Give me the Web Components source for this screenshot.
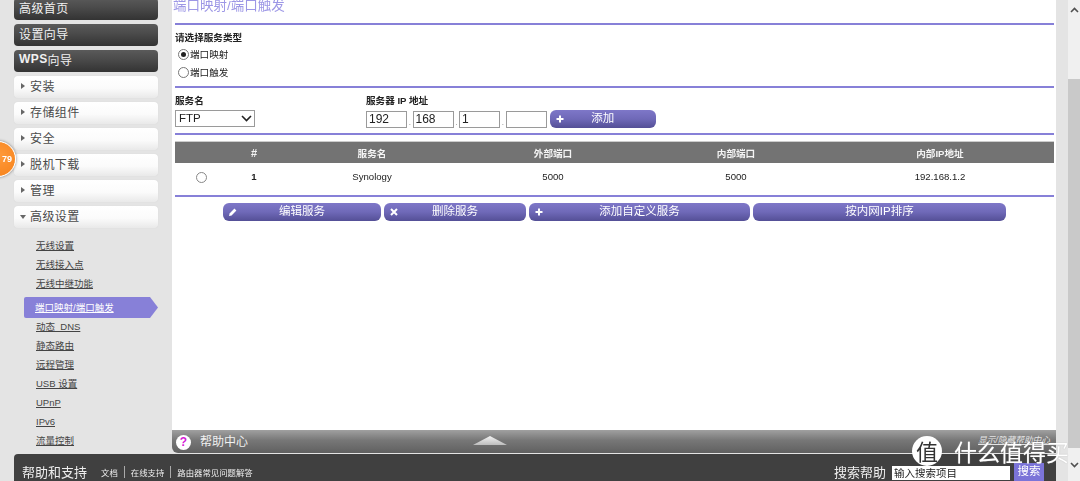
<!DOCTYPE html>
<html lang="zh">
<head>
<meta charset="utf-8">
<title>端口映射/端口触发</title>
<style>
  html, body { margin: 0; height: 481px; overflow: hidden; background: #e4e4e4; }
  body { font-family: "Liberation Sans", "Noto Sans CJK SC", sans-serif; }
</style>
</head>
<body>
<router-page></router-page>

<script>
const FONT = `"Liberation Sans", "Noto Sans CJK SC", sans-serif`;

// dark and light buttons of the left menu
class MenuButton extends HTMLElement {
  connectedCallback() {
    const kind = this.getAttribute('kind') || 'closed';
    const arrow = kind === 'dark' ? '' : `<span class="arrow ${kind}"></span>`;
    this.attachShadow({ mode: 'open' }).innerHTML = `
      <style>
        :host { display: block; height: 22px; margin-bottom: 4px; }
        .btn {
          height: 100%; box-sizing: border-box; display: flex; align-items: center; padding-bottom: 4px;
          border-radius: 4px; font: 12px ${FONT}; letter-spacing: .4px;
        }
        .dark { background: linear-gradient(#5a5a5a 0%, #4a4a4a 45%, #333 100%); color: #f1f1f1; padding-left: 5px; }
        .light {
          background: linear-gradient(#fff 0%, #fbfbfb 55%, #e9e9e9 100%); color: #4a4a4a;
          padding-left: 7px; box-shadow: 0 0 1px #cfcfcf;
        }
        .arrow { width: 0; height: 0; margin: 2px 5px 0 0; }
        .closed { border-left: 4px solid #666; border-top: 3px solid transparent; border-bottom: 3px solid transparent; }
        .open { border-top: 4px solid #666; border-left: 3px solid transparent; border-right: 3px solid transparent; margin: 4px 4px 0 -1px; }
      </style>
      <div class="btn ${kind === 'dark' ? 'dark' : 'light'}">${arrow}<slot></slot></div>`;
  }
}
customElements.define('menu-button', MenuButton);

// one link of the advanced settings submenu
class MenuLink extends HTMLElement {
  connectedCallback() {
    this.attachShadow({ mode: 'open' }).innerHTML = `
      <style>
        :host { display: block; height: 19px; padding-left: 36px; box-sizing: border-box; }
        span { font: 9.5px/19px ${FONT}; color: #444; text-decoration: underline; white-space: pre; }
        :host([active]) {
          height: 21px; width: 134px; margin: 5px 0 -2px 24px; padding-left: 11px;
          background: #8780d8; border-radius: 2px 0 0 2px;
          clip-path: polygon(0 0, 126px 0, 100% 50%, 126px 100%, 0 100%);
        }
        :host([active]) span { color: #fff; line-height: 21px; }
      </style>
      <span><slot></slot></span>`;
  }
}
customElements.define('menu-link', MenuLink);

class SideMenu extends HTMLElement {
  connectedCallback() {
    this.attachShadow({ mode: 'open' }).innerHTML = `
      <style>
        :host { display: block; width: 172px; flex: none; background: #e4e4e4; position: relative; }
        .buttons { margin: -2px 14px 0 14px; }
        .links { margin-top: 7px; }
        .badge {
          position: absolute; left: -20px; top: 141px; height: 34px; padding-right: 3px;
          box-sizing: content-box; width: 31px;
          border-radius: 50%; background: radial-gradient(circle at 55% 40%, #ff9a3a, #f57f17);
          border: 1px solid #fff; box-shadow: 0 0 3px #777;
          color: #fff; font: bold 9px/34px ${FONT}; text-align: right;
        }
      </style>
      <div class="buttons">
        <menu-button kind="dark">高级首页</menu-button>
        <menu-button kind="dark">设置向导</menu-button>
        <menu-button kind="dark"><b>WPS</b>向导</menu-button>
        <menu-button>安装</menu-button>
        <menu-button>存储组件</menu-button>
        <menu-button>安全</menu-button>
        <menu-button>脱机下载</menu-button>
        <menu-button>管理</menu-button>
        <menu-button kind="open">高级设置</menu-button>
      </div>
      <div class="links">
        <menu-link>无线设置</menu-link>
        <menu-link>无线接入点</menu-link>
        <menu-link>无线中继功能</menu-link>
        <menu-link active>端口映射/端口触发</menu-link>
        <menu-link>动态  DNS</menu-link>
        <menu-link>静态路由</menu-link>
        <menu-link>远程管理</menu-link>
        <menu-link>USB 设置</menu-link>
        <menu-link>UPnP</menu-link>
        <menu-link>IPv6</menu-link>
        <menu-link>流量控制</menu-link>
      </div>
      <div class="badge">79</div>`;
  }
}
customElements.define('side-menu', SideMenu);

// purple action button with an optional icon on the left
const ICONS = {
  plus: '<path d="M5 1.5v7M1.5 5h7" stroke="#fff" stroke-width="2"/>',
  cross: '<path d="M2 2l6 6M8 2L2 8" stroke="#fff" stroke-width="2"/>',
  pencil: '<path d="M1 9l.6-2.6L6.4 1.6l2 2L3.6 8.400z" fill="#fff"/>',
};
class ActionButton extends HTMLElement {
  connectedCallback() {
    const icon = this.getAttribute('icon');
    const svg = icon ? `<svg width="10" height="10" viewBox="0 0 10 10">${ICONS[icon]}</svg>` : '';
    this.attachShadow({ mode: 'open' }).innerHTML = `
      <style>
        :host { display: block; height: 18px; flex: none; }
        .b {
          height: 100%; position: relative; display: flex; align-items: center; justify-content: center;
          border-radius: 6px; background: linear-gradient(#7e77c8 0%, #6f69b8 50%, #544f96 100%);
          color: #fff; font: 11.5px/16px ${FONT}; padding-bottom: 2px; box-sizing: border-box;
        }
        svg { position: absolute; left: 5px; top: 4px; }
      </style>
      <div class="b">${svg}<slot></slot></div>`;
  }
}
customElements.define('action-button', ActionButton);

class PortPanel extends HTMLElement {
  connectedCallback() {
    this.attachShadow({ mode: 'open' }).innerHTML = `
      <style>
        :host { display: block; flex: 1; background: #fff; padding: 0 2px 0 3px; color: #222; font: 9.6px ${FONT}; min-width: 0; }
        .title { height: 23px; margin: -6px 0 -1px -2px; font: 13.5px/23px ${FONT}; color: #9d97e6; }
        hr { border: 0; height: 2px; background: #8780d8; margin: 0; }
        .type { height: 61px; box-sizing: border-box; padding-top: 6px; }
        .type div { height: 18px; display: flex; align-items: center; padding-left: 3px; }
        .type .head { font-weight: bold; padding-left: 0; height: 14px; line-height: 14px; }
        .dot { width: 9px; height: 9px; border: 1px solid #777; border-radius: 50%; margin-right: 1px; flex: none; background: #fff; box-sizing: content-box; position: relative; }
        .dot.on::after { content: ""; position: absolute; inset: 2px; border-radius: 50%; background: #222; }
        .service { height: 45px; box-sizing: border-box; padding-top: 6px; display: flex; }
        .service b { display: block; height: 13px; line-height: 13px; margin-bottom: 3px; }
        .name { width: 191px; }
        .select {
          width: 80px; height: 17px; box-sizing: border-box; border: 1px solid #9a9a9a; background: #fff;
          font: 11.5px/15px ${FONT}; padding-left: 3px; display: flex; justify-content: space-between; align-items: center;
        }
        .select svg { margin-right: 2px; }
        .ip { display: flex; align-items: center; }
        .ip i {
          display: block; width: 41px; height: 17px; box-sizing: border-box; border: 1px solid #9a9a9a;
          font: normal 12px/15px ${FONT}; padding-left: 2px; background: #fff;
        }
        .ip u { width: 5.5px; text-decoration: none; font-size: 8px; padding-top: 6px; color: #777; text-align: center; }
        .ip action-button { width: 106.5px; margin-left: 3px; }
        .table { margin-top: 6px; height: 54px; }
        .row { display: grid; grid-template-columns: 53px 52px 184px 178px 188px 1fr; padding-right: 4px; text-align: center; align-items: center; }
        .row.th { height: 22px; background: #737373; color: #f4f4f4; font-weight: bold; border-top: 1px solid #ccc; box-sizing: border-box; }
        .row.th .hash { font-size: 11px; }
        .row.td { height: 26px; box-sizing: border-box; }
        .row .dot { margin: 3px auto 0; border-color: #888; }
        .actions { display: flex; gap: 3px; padding: 6px 0 0 48px; }
        .actions :nth-child(1) { width: 158px; }
        .actions :nth-child(2) { width: 142px; }
        .actions :nth-child(3) { width: 221px; }
        .actions :nth-child(4) { width: 253px; }
      </style>
      <div class="title">端口映射/端口触发</div>
      <hr style="margin-top:7px">
      <div class="type">
        <div class="head">请选择服务类型</div>
        <div><span class="dot on"></span>端口映射</div>
        <div><span class="dot"></span>端口触发</div>
      </div>
      <hr>
      <div class="service">
        <div class="name">
          <b>服务名</b>
          <div class="select">FTP <svg width="11" height="7" viewBox="0 0 11 7"><path d="M1 1l4.500 4.500L10 1" fill="none" stroke="#222" stroke-width="1.600"/></svg></div>
        </div>
        <div>
          <b>服务器 IP 地址</b>
          <div class="ip">
            <i>192</i><u>.</u><i>168</i><u>.</u><i>1</i><u>.</u><i></i>
            <action-button icon="plus">添加</action-button>
          </div>
        </div>
      </div>
      <hr>
      <div class="table">
        <div class="row th"><span></span><span class="hash">#</span><span>服务名</span><span>外部端口</span><span>内部端口</span><span>内部IP地址</span></div>
        <div class="row td"><span class="dot"></span><b>1</b><span>Synology</span><span>5000</span><span>5000</span><span>192.168.1.2</span></div>
      </div>
      <hr>
      <div class="actions">
        <action-button icon="pencil">编辑服务</action-button>
        <action-button icon="cross">删除服务</action-button>
        <action-button icon="plus">添加自定义服务</action-button>
        <action-button>按内网IP排序</action-button>
      </div>`;
  }
}
customElements.define('port-panel', PortPanel);

// grey drawer at the bottom of the content area
class HelpBar extends HTMLElement {
  connectedCallback() {
    this.attachShadow({ mode: 'open' }).innerHTML = `
      <style>
        :host {
          display: flex; align-items: center; height: 23px; flex: none; position: relative;
          background: linear-gradient(#a0a0a0 0%, #777 45%, #606060 100%);
          border-radius: 0 0 0 6px; color: #f0f0f0; font: 12px ${FONT};
        }
        .q {
          width: 15px; height: 15px; border-radius: 50%; background: #fff; margin: 1px 9px 0 4px;
          color: #d61bd6; font: bold 12px/15px ${FONT}; text-align: center;
        }
        .label { margin-top: -3px; }
        .up {
          position: absolute; left: 301px; top: 6px; width: 34px; height: 9px;
          background: linear-gradient(#f4f4f4, #bdbdbd);
          clip-path: polygon(50% 0, 100% 100%, 0 100%);
        }
        .toggle {
          position: absolute; right: 6px; top: 3px; font: italic 8.7px ${FONT};
          color: #e4e4e4; text-decoration: underline;
        }
      </style>
      <span class="q">?</span><span class="label">帮助中心</span>
      <span class="up"></span>
      <span class="toggle">显示/隐藏帮助中心</span>`;
  }
}
customElements.define('help-bar', HelpBar);

class FooterBar extends HTMLElement {
  connectedCallback() {
    this.attachShadow({ mode: 'open' }).innerHTML = `
      <style>
        :host {
          position: absolute; left: 14px; right: 24px; top: 454px; height: 27px; box-sizing: border-box; padding-top: 8px;
          display: flex; align-items: center;
          background: #404040; border-radius: 4px 0 0 0; color: #eee; font: 8.4px ${FONT};
        }
        h2 { font: 13px ${FONT}; margin: 0 14px 0 8px; }
        .sep { width: 1px; height: 12px; background: #aaa; margin: 0 6px; }
        .search { margin-left: auto; align-self: stretch; display: flex; align-items: flex-start; font-size: 13px; padding-right: 12px; }
        .input {
          width: 118px; height: 14px; margin: 4px 0 0 6px; background: #fff; color: #222;
          font: 10.5px/14px ${FONT}; padding-left: 2px; box-sizing: border-box;
        }
        .go { width: 30px; height: 18px; margin: 1px 0 0 4px; background: #7b74d8; color: #fff; font: 11.5px/17px ${FONT}; text-align: center; }
      </style>
      <h2>帮助和支持</h2>
      <span>文档</span><span class="sep"></span><span>在线支持</span><span class="sep"></span><span>路由器常见问题解答</span>
      <div class="search">搜索帮助<div class="input">输入搜索项目</div><div class="go">搜索</div></div>`;
  }
}
customElements.define('footer-bar', FooterBar);

class ScrollTrack extends HTMLElement {
  connectedCallback() {
    this.attachShadow({ mode: 'open' }).innerHTML = `
      <style>
        :host { display: flex; flex-direction: column; width: 12px; flex: none; background: #f0f0f0; height: 481px; }
        svg { display: block; margin: 7px auto 0; }
        .thumb { margin-top: 66px; flex: 1; background: #c9c9c9; }
        .bottom { height: 33px; display: flex; align-items: flex-end; justify-content: center; padding-bottom: 13px; box-sizing: border-box; }
        .bottom svg { margin: 0; }
      </style>
      <svg width="9" height="6" viewBox="0 0 9 6"><path d="M1 5l3.500-3.500L8 5" fill="none" stroke="#505050" stroke-width="1.600"/></svg>
      <div class="thumb"></div>
      <div class="bottom"><svg width="9" height="6" viewBox="0 0 9 6"><path d="M1 1l3.500 3.500L8 1" fill="none" stroke="#505050" stroke-width="1.600"/></svg></div>`;
  }
}
customElements.define('scroll-track', ScrollTrack);

class RouterPage extends HTMLElement {
  connectedCallback() {
    this.attachShadow({ mode: 'open' }).innerHTML = `
      <style>
        :host { display: flex; height: 481px; width: 1080px; position: relative; overflow: hidden; }
        /* the reference is a soft, upscaled capture */
        side-menu, .center, footer-bar { filter: blur(.3px); }
        .center { width: 884px; flex: none; display: flex; flex-direction: column; height: 453px; }
        .center port-panel { flex: 1; }
        .strip { width: 12px; flex: none; background: #e4e4e4; }
        .mark {
          position: absolute; right: 11px; top: 436px; color: #fff; font: 23px/30px "Noto Sans CJK SC", sans-serif;
          display: flex; align-items: center; gap: 12px; text-shadow: 0 0 1px #aaa;
        }
        .mark span {
          width: 30px; height: 30px; border-radius: 50%; background: #fff; color: #333;
          font-size: 22px; line-height: 29px; text-align: center; text-shadow: none;
        }
      </style>
      <side-menu></side-menu>
      <div class="center">
        <port-panel></port-panel>
        <help-bar></help-bar>
      </div>
      <div class="strip"></div>
      <scroll-track></scroll-track>
      <footer-bar></footer-bar>
      <div class="mark"><span>值</span>什么值得买</div>`;
  }
}
customElements.define('router-page', RouterPage);
</script>
</body>
</html>
